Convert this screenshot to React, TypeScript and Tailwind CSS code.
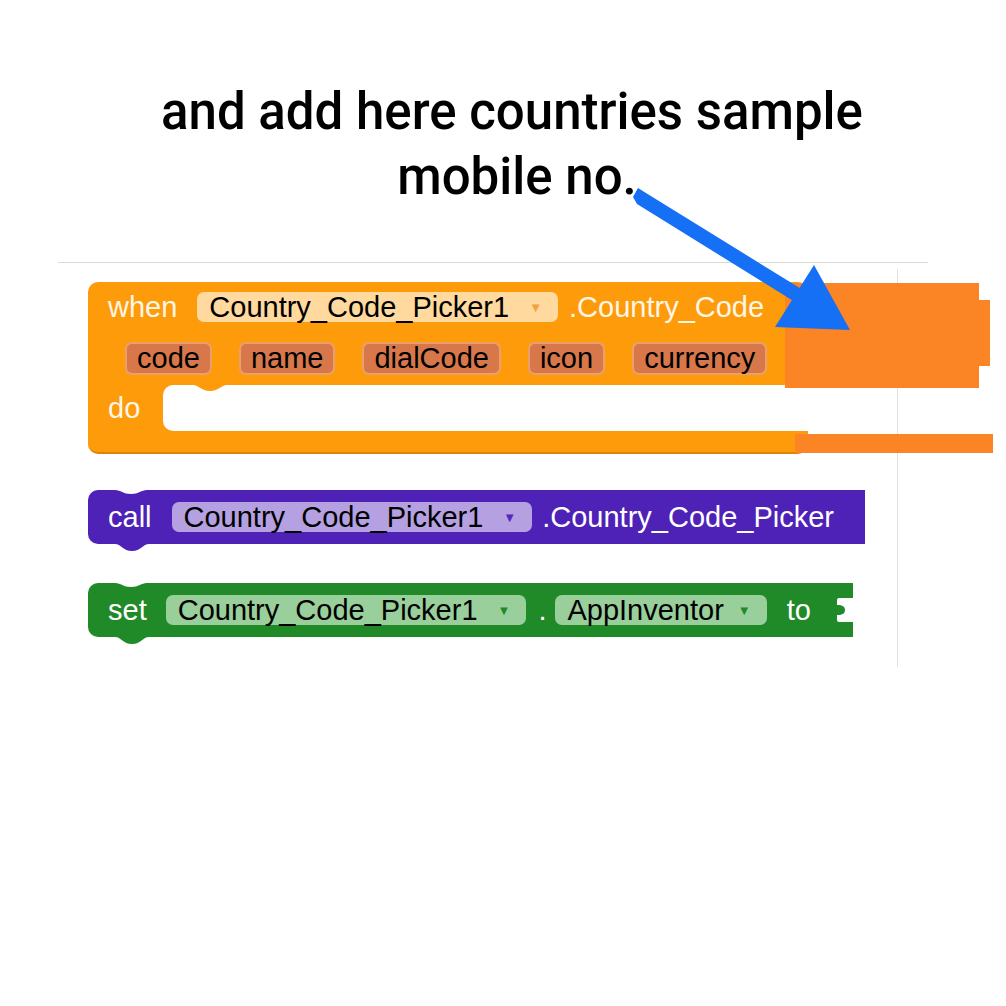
import React from 'react'

const blockFont = { fontFamily: '"Liberation Sans", Arial, sans-serif' }

function Field({ label, bg, arrow, gap = 'ml-[20px]' }: { label: string; bg: string; arrow?: string; gap?: string }) {
  return (
    <div className={`flex h-[30px] items-center rounded-[7px] pl-3 pr-[16px] text-black ${bg}`}>
      <span>{label}</span>
      {arrow && <span className={`${gap} text-[13px] ${arrow}`}>▼</span>}
    </div>
  )
}

function Param({ label }: { label: string }) {
  return (
    <div className="flex h-[33px] items-center rounded-[7px] border-2 border-[#e9a06a] bg-[#d8784a] px-[10px] text-black">
      {label}
    </div>
  )
}

function EventBlock() {
  return (
    <div className="relative w-[720px] text-[29px] leading-none" style={blockFont}>
      <div className="rounded-t-[10px] bg-[#fd9b0b] px-[20px] pt-[10px] pb-[10px]">
        <div className="flex h-[30px] items-center">
          <span className="text-[#fff6e6]">when</span>
          <div className="ml-[20px]">
            <Field label="Country_Code_Picker1" bg="bg-[#ffd99e]" arrow="text-[#f3a33c]" />
          </div>
          <span className="ml-[11px] text-[#fff6e6]">.Country_Code</span>
        </div>
        <div className="mt-[20px] ml-[17px] flex gap-[27px]">
          {['code', 'name', 'dialCode', 'icon', 'currency'].map((p) => (
            <Param key={p} label={p} />
          ))}
        </div>
      </div>
      <div className="flex h-[46px] bg-[#fd9b0b]">
        <div className="flex w-[75px] items-center pl-[20px] text-[#fff6e6]">do</div>
        <div className="relative flex-1 rounded-l-[10px] bg-white">
          <svg className="absolute top-0 left-[30px]" width="34" height="8" viewBox="0 0 34 8">
            <path d="M0 0 C6 0 8 6 17 6 C26 6 28 0 34 0 Z" fill="#fd9b0b" />
          </svg>
        </div>
      </div>
      <div className="h-[23px] rounded-b-[10px] border-b-2 border-[#d98600] bg-[#fd9b0b]" />
    </div>
  )
}

function Notches({ color }: { color: string }) {
  return (
    <>
      <svg className="absolute top-0 left-[27px]" width="32" height="5" viewBox="0 0 32 5">
        <path d="M0 0 C6 0 8 4 16 4 C24 4 26 0 32 0 Z" fill="#ffffff" />
      </svg>
      <svg className="absolute bottom-[-7px] left-[27px]" width="34" height="7" viewBox="0 0 34 7">
        <path d="M0 0 C6 0 8 7 17 7 C26 7 28 0 34 0 Z" fill={color} />
      </svg>
    </>
  )
}

function CallBlock() {
  return (
    <div
      className="relative mt-[36px] flex h-[54px] w-[777px] items-center rounded-l-[10px] bg-[#4e22b7] pl-[20px] text-[29px] leading-none"
      style={blockFont}
    >
      <Notches color="#4e22b7" />
      <span className="text-white">call</span>
      <div className="ml-[20px]">
        <Field label="Country_Code_Picker1" bg="bg-[#b5a1e1]" arrow="text-[#5428bd]" />
      </div>
      <span className="ml-[10px] text-white">.Country_Code_Picker</span>
    </div>
  )
}

function SetBlock() {
  return (
    <div
      className="relative mt-[39px] flex h-[54px] w-[765px] items-center rounded-l-[10px] bg-[#1f8a27] pl-[20px] text-[29px] leading-none"
      style={blockFont}
    >
      <Notches color="#1f8a27" />
      <span className="text-white">set</span>
      <div className="ml-[19px]">
        <Field label="Country_Code_Picker1" bg="bg-[#99cf9b]" arrow="text-[#1f8a27]" />
      </div>
      <span className="ml-[12px] text-white">.</span>
      <div className="ml-[9px]">
        <Field label="AppInventor" bg="bg-[#99cf9b]" arrow="text-[#1f8a27]" gap="ml-[14px]" />
      </div>
      <span className="ml-[20px] text-white">to</span>
      <svg className="absolute top-[15px] right-0" width="17" height="24" viewBox="0 0 17 24">
        <path d="M3 0 H17 V24 H3 Q1 24 1 22 V17 C7 17 9 15 9 12 C9 9 7 7 1 7 V2 Q1 0 3 0 Z" fill="#ffffff" />
      </svg>
    </div>
  )
}

export default function App() {
  return (
    <div className="relative h-[1006px] w-[1006px] overflow-hidden bg-white">
      <div
        className="pt-[79px] pl-[18px] text-center text-[51px] leading-[65px] font-medium text-black"
        style={{ fontFamily: 'Roboto, "Noto Sans", sans-serif' }}
      >
        <div>and add here countries sample</div>
        <div className="pl-[10px]">mobile no.</div>
      </div>

      <div className="mt-[53px] ml-[58px] w-[870px] border-t border-[#dadada]">
        <div className="mt-[6px] h-[398px] w-[840px] border-r border-[#e2e2e2] pt-[13px] pl-[30px]">
          <EventBlock />
          <CallBlock />
          <SetBlock />
        </div>
      </div>

      {/* scribbled orange cover-up */}
      <div className="absolute top-[283px] left-[785px] h-[105px] w-[194px] bg-[#fb8424]" />
      <div className="absolute top-[300px] left-[978px] h-[66px] w-[12px] bg-[#fb8424]" />
      <div className="absolute top-[434px] left-[795px] h-[19px] w-[198px] bg-[#fb8424]" />

      {/* blue arrow */}
      <svg className="absolute top-0 left-0" width="1006" height="1006" viewBox="0 0 1006 1006">
        <polygon points="638,188 646,193 803,290 795,302 637,204 633,197" fill="#1670f6" />
        <polygon points="775,327 814,265 850,330" fill="#1670f6" />
      </svg>
    </div>
  )
}
